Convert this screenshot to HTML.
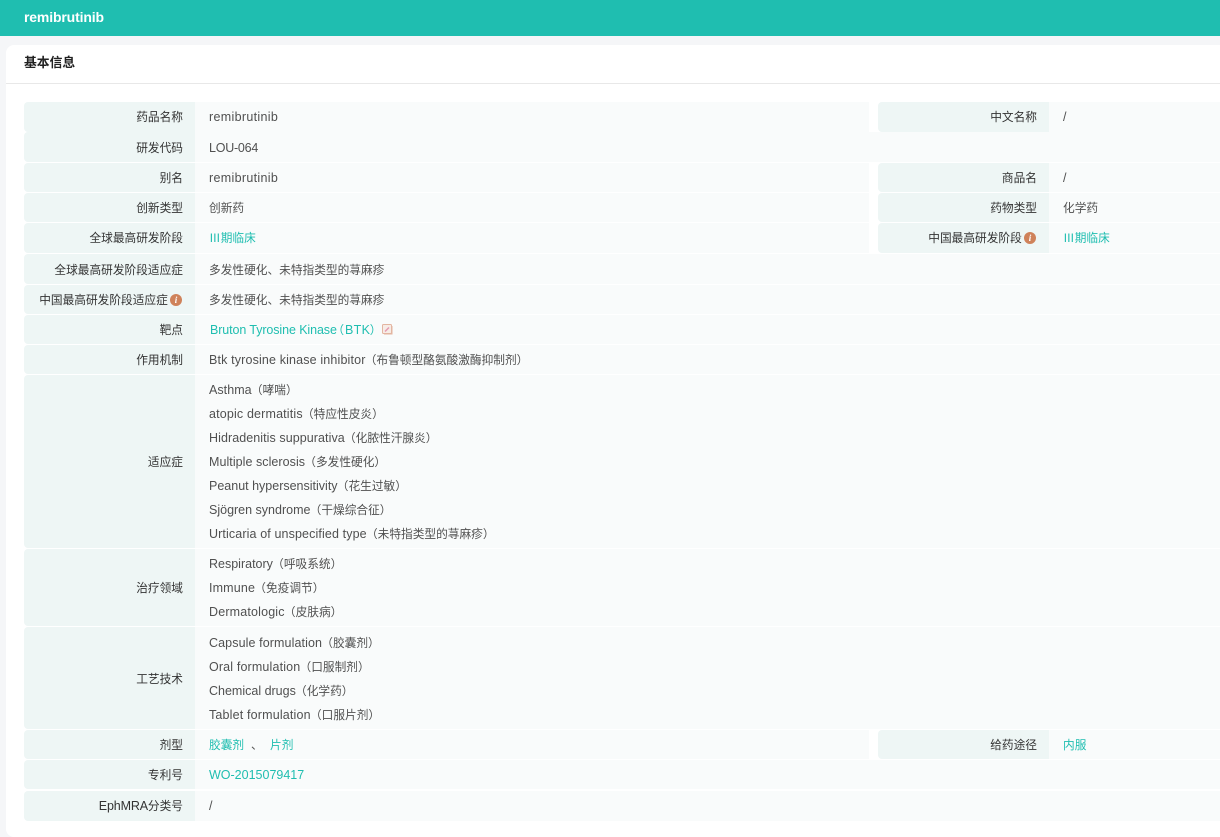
<!DOCTYPE html>
<html lang="zh"><head><meta charset="utf-8"><title>remibrutinib</title>
<style>
html,body{margin:0;padding:0;width:1220px;height:837px;overflow:hidden;background:#f5f6f8}
body{font-family:"Liberation Sans","Noto Sans CJK SC",sans-serif;font-size:11.7px;position:relative}
.bar{position:absolute;left:0;top:0;width:1220px;height:36px;background:#1fbeb0}
.title{position:absolute;left:24px;top:8px;line-height:18px;font-size:14px;font-weight:bold;color:#fff;letter-spacing:-.15px}
.card{position:absolute;left:6px;top:45px;width:1230px;height:792px;background:#fff;border-radius:8px}
.hl{position:absolute;left:6px;top:83px;width:1214px;height:1px;background:#e8e8e8}
.h{position:absolute;left:24px;top:54px;line-height:18px;font-size:12.8px;font-weight:bold;color:#222}
.k{position:absolute;background:#eef6f5;border-radius:4px 0 0 4px;width:171px}
.b{position:absolute;background:#f9fbfb}
.t{position:absolute;white-space:nowrap;line-height:18px;color:#505050}
.c{margin-top:1px}
.r{position:absolute;white-space:nowrap;line-height:18px;color:#333;text-align:right;margin-top:1px}
.a{color:#1fbeb0}
.l{font-size:12.5px;letter-spacing:.1px;margin-right:-.8px}
.n{font-family:"Noto Sans CJK SC",sans-serif}
.ic{display:inline-block;width:12px;height:12px;margin-left:-1px;margin-right:1px;border-radius:50%;background:#cf825a;color:#fff;font:italic bold 9px/12px "Liberation Serif",serif;text-align:center;vertical-align:1px}
</style></head><body>
<div class="bar"></div><div class="title">remibrutinib</div>
<div class="card"></div><div class="hl"></div><div class="h">基本信息</div>

<div class="k" style="left:24px;top:102px;height:30px"></div><div class="b" style="left:195px;top:102px;width:674px;height:30px"></div>
<div class="k" style="left:878px;top:102px;height:30px"></div><div class="b" style="left:1049px;top:102px;width:171px;height:30px"></div>
<div class="k" style="left:24px;top:132px;height:30px"></div><div class="b" style="left:195px;top:132px;width:1025px;height:30px"></div>
<div class="k" style="left:24px;top:163px;height:29px"></div><div class="b" style="left:195px;top:163px;width:674px;height:29px"></div>
<div class="k" style="left:878px;top:163px;height:29px"></div><div class="b" style="left:1049px;top:163px;width:171px;height:29px"></div>
<div class="k" style="left:24px;top:193px;height:29px"></div><div class="b" style="left:195px;top:193px;width:674px;height:29px"></div>
<div class="k" style="left:878px;top:193px;height:29px"></div><div class="b" style="left:1049px;top:193px;width:171px;height:29px"></div>
<div class="k" style="left:24px;top:223px;height:30px"></div><div class="b" style="left:195px;top:223px;width:674px;height:30px"></div>
<div class="k" style="left:878px;top:223px;height:30px"></div><div class="b" style="left:1049px;top:223px;width:171px;height:30px"></div>
<div class="k" style="left:24px;top:254px;height:30px"></div><div class="b" style="left:195px;top:254px;width:1025px;height:30px"></div>
<div class="k" style="left:24px;top:285px;height:29px"></div><div class="b" style="left:195px;top:285px;width:1025px;height:29px"></div>
<div class="k" style="left:24px;top:315px;height:29px"></div><div class="b" style="left:195px;top:315px;width:1025px;height:29px"></div>
<div class="k" style="left:24px;top:345px;height:29px"></div><div class="b" style="left:195px;top:345px;width:1025px;height:29px"></div>
<div class="k" style="left:24px;top:375px;height:173px"></div><div class="b" style="left:195px;top:375px;width:1025px;height:173px"></div>
<div class="k" style="left:24px;top:549px;height:77px"></div><div class="b" style="left:195px;top:549px;width:1025px;height:77px"></div>
<div class="k" style="left:24px;top:627px;height:102px"></div><div class="b" style="left:195px;top:627px;width:1025px;height:102px"></div>
<div class="k" style="left:24px;top:730px;height:29px"></div><div class="b" style="left:195px;top:730px;width:674px;height:29px"></div>
<div class="k" style="left:878px;top:730px;height:29px"></div><div class="b" style="left:1049px;top:730px;width:171px;height:29px"></div>
<div class="k" style="left:24px;top:760px;height:29px"></div><div class="b" style="left:195px;top:760px;width:1025px;height:29px"></div>
<div class="k" style="left:24px;top:791px;height:30px"></div><div class="b" style="left:195px;top:791px;width:1025px;height:30px"></div>

<div class="r" style="right:1037px;top:108px">药品名称</div>
<div class="r" style="right:1037px;top:139px">研发代码</div>
<div class="r" style="right:1037px;top:169px">别名</div>
<div class="r" style="right:1037px;top:199px">创新类型</div>
<div class="r" style="right:1037px;top:229px">全球最高研发阶段</div>
<div class="r" style="right:1037px;top:261px">全球最高研发阶段适应症</div>
<div class="r" style="right:1037px;top:291px">中国最高研发阶段适应症 <span class="ic">i</span></div>
<div class="r" style="right:1037px;top:321px">靶点</div>
<div class="r" style="right:1037px;top:351px">作用机制</div>
<div class="r" style="right:1037px;top:453px">适应症</div>
<div class="r" style="right:1037px;top:579px">治疗领域</div>
<div class="r" style="right:1037px;top:670px">工艺技术</div>
<div class="r" style="right:1037px;top:736px">剂型</div>
<div class="r" style="right:1037px;top:766px">专利号</div>
<div class="r" style="right:1037px;top:797px;margin-top:0"><span class="l" style="letter-spacing:-.15px;margin:0">EphMRA</span>分类号</div>

<div class="r" style="right:183px;top:108px">中文名称</div>
<div class="r" style="right:183px;top:169px">商品名</div>
<div class="r" style="right:183px;top:199px">药物类型</div>
<div class="r" style="right:183px;top:229px">中国最高研发阶段 <span class="ic">i</span></div>
<div class="r" style="right:183px;top:736px">给药途径</div>

<div class="t" style="left:209px;top:108px"><span class="l" style="letter-spacing:.32px">remibrutinib</span></div>
<div class="t" style="left:209px;top:139px"><span class="l" style="letter-spacing:-.24px">LOU-064</span></div>
<div class="t" style="left:209px;top:169px"><span class="l" style="letter-spacing:.32px">remibrutinib</span></div>
<div class="t c" style="left:209px;top:199px">创新药</div>
<div class="t a" style="left:209px;top:229px"><span class="n">Ⅲ期临床</span></div>
<div class="t c" style="left:209px;top:261px">多发性硬化、未特指类型的荨麻疹</div>
<div class="t c" style="left:209px;top:291px">多发性硬化、未特指类型的荨麻疹</div>
<div class="t a" style="left:210px;top:321px"><span class="l" style="letter-spacing:-.1px;margin-right:-4.5px">Bruton Tyrosine Kinase</span>（<span class="l" style="margin-left:1px;margin-right:-.5px;letter-spacing:.3px">BTK</span>）</div>
<svg style="position:absolute;left:382px;top:324px" width="11" height="11" viewBox="0 0 11 11" fill="none"><rect x=".5" y=".5" width="9" height="9" rx="1" fill="#f7ece6" stroke="#e3b5a0"/><path d="M3 7.5 7 3.5" stroke="#e59ab0" stroke-width="1.5"/><path d="M10 2v8H2" stroke="#e3b5a0"/></svg>
<div class="t" style="left:209px;top:351px"><span class="l" style="letter-spacing:.15px">Btk tyrosine kinase inhibitor</span>（布鲁顿型酪氨酸激酶抑制剂）</div>
<div class="t" style="left:209px;top:381px"><span class="l" style="letter-spacing:.05px">Asthma</span>（哮喘）</div>
<div class="t" style="left:209px;top:405px"><span class="l" style="letter-spacing:.16px">atopic dermatitis</span>（特应性皮炎）</div>
<div class="t" style="left:209px;top:429px"><span class="l" style="letter-spacing:.07px">Hidradenitis suppurativa</span>（化脓性汗腺炎）</div>
<div class="t" style="left:209px;top:453px"><span class="l" style="letter-spacing:.05px">Multiple sclerosis</span>（多发性硬化）</div>
<div class="t" style="left:209px;top:477px"><span class="l" style="letter-spacing:0">Peanut hypersensitivity</span>（花生过敏）</div>
<div class="t" style="left:209px;top:501px"><span class="l" style="letter-spacing:0">Sjögren syndrome</span>（干燥综合征）</div>
<div class="t" style="left:209px;top:525px"><span class="l" style="letter-spacing:.12px">Urticaria of unspecified type</span>（未特指类型的荨麻疹）</div>
<div class="t" style="left:209px;top:555px"><span class="l" style="letter-spacing:0">Respiratory</span>（呼吸系统）</div>
<div class="t" style="left:209px;top:579px"><span class="l" style="letter-spacing:.15px">Immune</span>（免疫调节）</div>
<div class="t" style="left:209px;top:603px"><span class="l" style="letter-spacing:.17px">Dermatologic</span>（皮肤病）</div>
<div class="t" style="left:209px;top:634px"><span class="l" style="letter-spacing:.1px">Capsule formulation</span>（胶囊剂）</div>
<div class="t" style="left:209px;top:658px"><span class="l" style="letter-spacing:.15px">Oral formulation</span>（口服制剂）</div>
<div class="t" style="left:209px;top:682px"><span class="l" style="letter-spacing:0">Chemical drugs</span>（化学药）</div>
<div class="t" style="left:209px;top:706px"><span class="l" style="letter-spacing:.17px">Tablet formulation</span>（口服片剂）</div>
<div class="t a c" style="left:209px;top:736px">胶囊剂</div>
<div class="t c" style="left:251px;top:736px">、</div>
<div class="t a c" style="left:270px;top:736px">片剂</div>
<div class="t a" style="left:209px;top:766px"><span class="l" style="letter-spacing:0">WO-2015079417</span></div>
<div class="t" style="left:209px;top:797px"><span class="l">/</span></div>

<div class="t" style="left:1063px;top:108px"><span class="l">/</span></div>
<div class="t" style="left:1063px;top:169px"><span class="l">/</span></div>
<div class="t c" style="left:1063px;top:199px">化学药</div>
<div class="t a" style="left:1063px;top:229px"><span class="n">Ⅲ期临床</span></div>
<div class="t a c" style="left:1063px;top:736px">内服</div>
</body></html>
